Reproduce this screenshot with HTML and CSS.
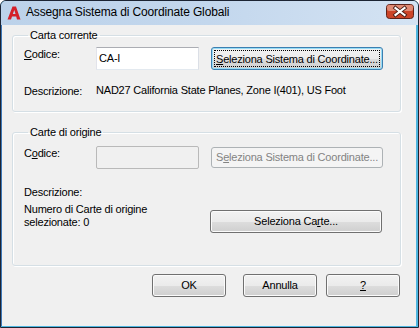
FILE: index.html
```html
<!DOCTYPE html>
<html lang="it">
<head>
  <meta charset="UTF-8">
  <title>Assegna Sistema di Coordinate Globali</title>
  <link rel="stylesheet" href="styles.css">
</head>
<body>
  <div class="window">
    <div class="titlebar">
      <svg class="app-icon" width="14" height="14" viewBox="0 0 14 14">
        <path fill="#d4202a" fill-rule="evenodd" d="M0.5 13.5 L5.5 0.5 L9 0.5 L13.5 13.5 L10 13.5 L9.2 10.5 L5 10.5 L4 13.5 Z M5.8 8 L8.5 8 L7.3 4 Z"/>
      </svg>
      <span class="title">Assegna Sistema di Coordinate Globali</span>
      <svg class="close" width="28" height="15" viewBox="0 0 28 15">
        <rect x="0.5" y="0.5" width="27" height="14" rx="3" fill="#cc4428" stroke="#5e2219"/>
        <rect x="1" y="1" width="26" height="6" rx="2" fill="#e08a74"/>
        <path d="M9.5 4 L18.5 11 M18.5 4 L9.5 11" stroke="#4a1e17" stroke-width="4" stroke-linecap="square"/>
        <path d="M9.5 4 L18.5 11 M18.5 4 L9.5 11" stroke="#ffffff" stroke-width="2.2" stroke-linecap="square"/>
      </svg>
    </div>

    <div class="client">
      <fieldset class="group group-current">
        <legend>Carta corrente</legend>
        <div class="grid">
          <span class="label"><u>C</u>odice:</span>
          <div class="textbox">CA-I</div>
          <button class="btn focused"><span class="focus-rect"><u>S</u>eleziona Sistema di Coordinate...</span></button>
        </div>
        <div class="desc">
          <span class="label">Descrizione:</span>
          <span>NAD27 California State Planes, Zone I(401), US Foot</span>
        </div>
      </fieldset>

      <fieldset class="group group-source">
        <legend>Carte di origine</legend>
        <div class="grid">
          <span class="label">C<u>o</u>dice:</span>
          <div class="textbox disabled"></div>
          <button class="btn disabled">S<u>e</u>leziona Sistema di Coordinate...</button>
        </div>
        <div class="desc">
          <span class="label">Descrizione:</span>
        </div>
        <div class="count-row">
          <span class="count">Numero di Carte di origine<br>selezionate: 0</span>
          <button class="btn">Seleziona Ca<u>r</u>te...</button>
        </div>
      </fieldset>

      <div class="actions">
        <button class="btn action">OK</button>
        <button class="btn action annulla">Annulla</button>
        <button class="btn action help"><u>?</u></button>
      </div>
    </div>
  </div>
</body>
</html>
```

FILE: styles.css
```css
body {
  margin: 0;
  background: #ffffff;
  font-family: "Liberation Sans", Arial, sans-serif;
  font-size: 11px;
  letter-spacing: -0.2px;
  line-height: 13px;
  color: #000;
}

.window {
  width: 419px;
  height: 328px;
  box-sizing: border-box;
  border: 1px solid #1c2433;
  border-radius: 6px 6px 0 0;
  background: #4fb6e0;
  display: flex;
  flex-direction: column;
  overflow: hidden;
}

.titlebar {
  height: 24px;
  flex: none;
  display: flex;
  align-items: center;
  padding-left: 6px;
  background: linear-gradient(to right, #bcd2ea 0%, #c3d7ed 50%, #d4e3f3 100%);
}

.app-icon {
  margin-right: 5px;
  margin-top: -1px;
}

.title {
  font-size: 12px;
  letter-spacing: -0.15px;
  color: #000;
  margin-top: -1px;
}

.close {
  flex: none;
  margin-left: auto;
  margin-right: 4px;
  margin-top: -4px;
}

.client {
  flex: 1;
  background: #f0f0f0;
  margin: 0 2px 1px 0;
  border-left: 1px solid #3d78b8;
  padding: 4px 15px 0 10px;
}

.group {
  margin: 0;
  border: 1px solid #d5dfe5;
  border-radius: 3px;
  box-shadow: inset 1px 1px 0 #fff, 1px 1px 0 #fff;
  padding: 5px 0 13px 11px;
}

.group legend {
  padding: 0 2px;
  margin-left: 4px;
  line-height: 13px;
}

.group-source {
  margin-top: 14px;
  padding-top: 7px;
  padding-bottom: 32px;
}

.grid {
  display: grid;
  grid-template-columns: 72px 115px 172px;
  align-items: start;
}

.label {
  display: inline-block;
  width: 72px;
  padding-top: 1px;
}

.textbox {
  width: 103px;
  height: 23px;
  box-sizing: border-box;
  border: 1px solid #abadb3;
  border-left-color: #e2e3ea;
  border-right-color: #dbdfe6;
  border-bottom-color: #e3e9ef;
  background: #fff;
  padding: 4px 2px 0;
}

.textbox.disabled {
  background: #f0f0f0;
  border: 1px solid #b9b9b9;
  border-radius: 2px;
}

.btn {
  height: 23px;
  box-sizing: border-box;
  border: 1px solid #707070;
  border-radius: 3px;
  background: linear-gradient(#f2f2f2 0%, #ebebeb 50%, #dddddd 51%, #cfcfcf 100%);
  box-shadow: inset 0 0 0 1px #fbfbfb;
  font: inherit;
  letter-spacing: inherit;
  color: #000;
  padding: 0;
  text-align: center;
}

.btn.focused {
  border-color: #3c7fb1;
  box-shadow: inset 0 0 0 1px #97dcf6;
  padding: 2px;
}

.focus-rect {
  display: block;
  height: 100%;
  box-sizing: border-box;
  border: 1px dotted #000;
  padding-top: 2px;
}

.btn.disabled {
  border-color: #adb2b5;
  background: #f4f4f4;
  box-shadow: none;
  color: #838383;
  height: 21px;
  margin-top: 1px;
}

.desc {
  margin-top: 14px;
  display: flex;
}

.group-source .desc {
  margin-top: 16px;
}

.count-row {
  margin-top: 4px;
  display: flex;
  align-items: start;
}

.count {
  width: 186px;
}

.count-row .btn {
  width: 172px;
  margin-top: 7px;
}

.actions {
  display: flex;
  justify-content: flex-end;
  margin-top: 8px;
  padding-right: 1px;
}

.action {
  width: 74px;
}

.annulla {
  margin-left: 17px;
}

.help {
  margin-left: 9px;
}
```
